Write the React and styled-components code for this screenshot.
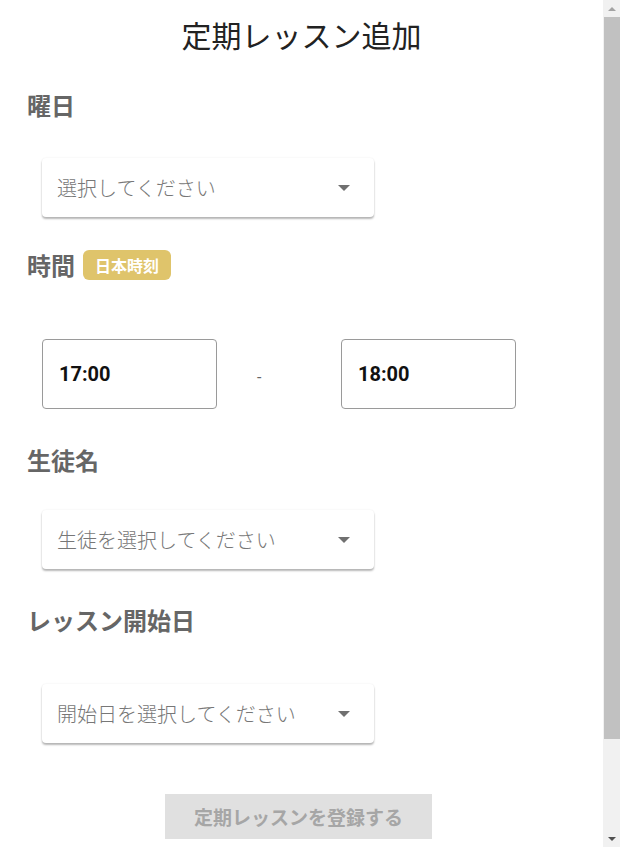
import React from "react";
import styled, { createGlobalStyle } from "styled-components";

const Global = createGlobalStyle`
  html, body { margin: 0; padding: 0; background: #fff; }
  body { font-family: Roboto, "Noto Sans CJK JP", sans-serif; }
`;

const Page = styled.div`
  min-height: 955px;
  box-sizing: border-box;
  width: 603px;
  padding: 0 0 0 27px;
  display: flex;
  flex-direction: column;
`;

const Title = styled.h1`
  margin: 15px 0 0 -27px;
  font-size: 30px;
  font-weight: 400;
  line-height: 38px;
  color: #222;
  text-align: center;
  font-family: "Noto Sans CJK JP", sans-serif;
`;

const Label = styled.div`
  margin-top: ${(p) => p.$mt}px;
  display: flex;
  align-items: center;
  gap: 8px;
  font-size: 24px;
  font-weight: 700;
  line-height: 32px;
  color: #666;
  font-family: "Noto Sans CJK JP", sans-serif;
`;

const Badge = styled.span`
  display: inline-flex;
  align-items: center;
  height: 30px;
  padding: 0 12px;
  border-radius: 6px;
  background: #dfc46b;
  color: #fff;
  font-size: 16px;
  font-weight: 700;
`;

const Select = styled.div`
  margin: ${(p) => p.$mt}px 0 0 15px;
  width: 332px;
  height: 59px;
  box-sizing: border-box;
  border-radius: 4px;
  background: #fff;
  box-shadow: 0 2px 2px rgba(0, 0, 0, 0.28), 0 0 2px rgba(0, 0, 0, 0.08);
  display: flex;
  align-items: center;
  justify-content: space-between;
  padding: 0 24px 0 15px;
  font-size: 20px;
  color: #777;
  font-weight: 300;
  font-family: "Noto Sans CJK JP", sans-serif;
`;

const Arrow = styled.span`
  width: 0;
  height: 0;
  border-left: 6px solid transparent;
  border-right: 6px solid transparent;
  border-top: 6px solid #707070;
`;

const TimeRow = styled.div`
  margin: 58px 0 0 15px;
  display: flex;
  align-items: center;
`;

const TimeInput = styled.div`
  width: 175px;
  height: 70px;
  box-sizing: border-box;
  border: 1px solid #9a9a9a;
  border-radius: 4px;
  display: flex;
  align-items: center;
  padding-left: 16px;
  font-size: 20px;
  font-weight: 700;
  color: #111;
  font-family: Roboto, sans-serif;
`;

const Dash = styled.span`
  width: 124px;
  box-sizing: border-box;
  padding: 6px 0 0 40px;
  font-size: 16px;
  color: #666;
`;

const ButtonRow = styled.div`
  margin: 51px 0 0 -27px;
  display: flex;
  justify-content: center;
  padding-right: 6px;
`;

const Button = styled.button`
  width: 267px;
  height: 45px;
  border: none;
  background: #e0e0e0;
  color: #a6a6a6;
  font-size: 19px;
  font-weight: 700;
  font-family: "Noto Sans CJK JP", sans-serif;
  cursor: default;
`;

const Scrollbar = styled.div`
  position: fixed;
  top: 0;
  right: 0;
  bottom: 0;
  width: 17px;
  background: #f1f1f1;
  display: flex;
  flex-direction: column;
  align-items: stretch;
`;

const ScrollArrow = styled.div`
  height: 17px;
  display: flex;
  align-items: center;
  justify-content: center;
  &::after {
    content: "";
    width: 0;
    height: 0;
    border-left: 4px solid transparent;
    border-right: 4px solid transparent;
    ${(p) =>
      p.$up
        ? "border-bottom: 4px solid #a3a3a3;"
        : "border-top: 4px solid #505050;"}
  }
`;

const Thumb = styled.div`
  height: 722px;
  margin-left: 1px;
  background: #c1c1c1;
`;

const Spacer = styled.div`
  flex: 1;
`;

export default function App() {
  return (
    <>
      <Global />
      <Page>
        <Title>定期レッスン追加</Title>
        <Label $mt={36}>曜日</Label>
        <Select $mt={37}>
          <span>選択してください</span>
          <Arrow />
        </Select>
        <Label $mt={32}>
          時間<Badge>日本時刻</Badge>
        </Label>
        <TimeRow>
          <TimeInput>17:00</TimeInput>
          <Dash>-</Dash>
          <TimeInput>18:00</TimeInput>
        </TimeRow>
        <Label $mt={35}>生徒名</Label>
        <Select $mt={34}>
          <span>生徒を選択してください</span>
          <Arrow />
        </Select>
        <Label $mt={35}>レッスン開始日</Label>
        <Select $mt={48}>
          <span>開始日を選択してください</span>
          <Arrow />
        </Select>
        <ButtonRow>
          <Button>定期レッスンを登録する</Button>
        </ButtonRow>
      </Page>
      <Scrollbar>
        <ScrollArrow $up />
        <Thumb />
        <Spacer />
        <ScrollArrow />
      </Scrollbar>
    </>
  );
}
